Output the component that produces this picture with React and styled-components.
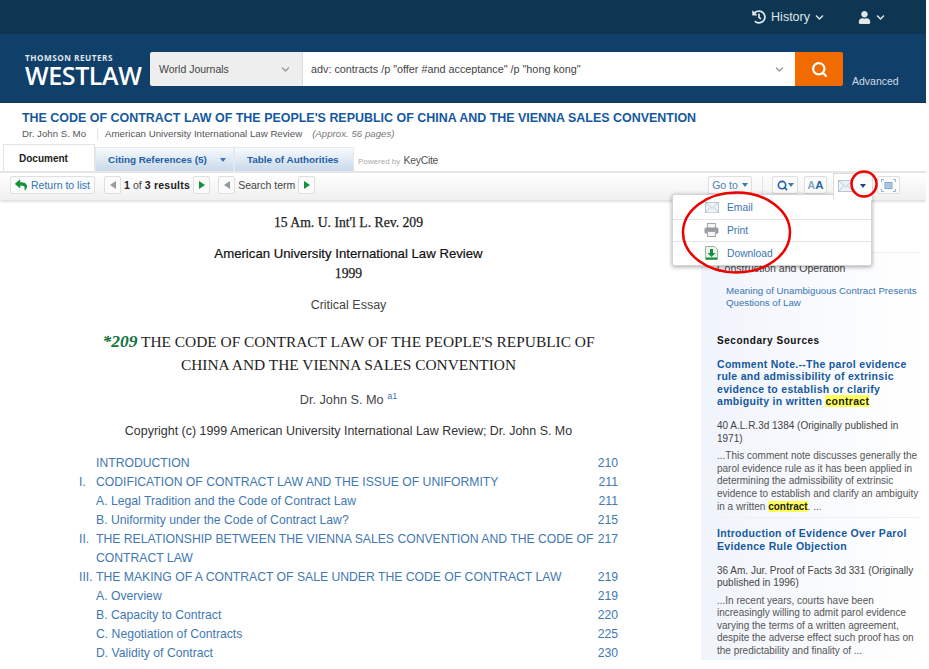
import { createGlobalStyle } from 'styled-components';
import styled from 'styled-components';
import { FaHistory, FaUser, FaChevronDown, FaReply } from 'react-icons/fa';
import { Search as SearchGlyph } from 'lucide-react';

const Global = createGlobalStyle`
    html, body { margin: 0; padding: 0; background: #fff; }
    body { font-family: "Liberation Sans", Arial, sans-serif; }
    * { box-sizing: border-box; }
`;

const toc = [
    { n: '', t: 'INTRODUCTION', p: '210' },
    { n: 'I.', t: 'CODIFICATION OF CONTRACT LAW AND THE ISSUE OF UNIFORMITY', p: '211' },
    { n: '', t: 'A. Legal Tradition and the Code of Contract Law', p: '211' },
    { n: '', t: 'B. Uniformity under the Code of Contract Law?', p: '215' },
    { n: 'II.', t: 'THE RELATIONSHIP BETWEEN THE VIENNA SALES CONVENTION AND THE CODE OF CONTRACT LAW', p: '217' },
    { n: 'III.', t: 'THE MAKING OF A CONTRACT OF SALE UNDER THE CODE OF CONTRACT LAW', p: '219' },
    { n: '', t: 'A. Overview', p: '219' },
    { n: '', t: 'B. Capacity to Contract', p: '220' },
    { n: '', t: 'C. Negotiation of Contracts', p: '225' },
    { n: '', t: 'D. Validity of Contract', p: '230' },
];

function MailIcon({ size = 18 }) {
    return (
        <svg width={size} height={size * 0.8} viewBox="0 0 20 16">
            <rect x="0.5" y="0.5" width="19" height="15" fill="#eef3f7" stroke="#a3b8c8" />
            <path d="M1 1l9 8 9-8M1 15l6-7M19 15l-6-7" fill="none" stroke="#a3b8c8" />
        </svg>
    );
}

function PrintIcon() {
    return (
        <svg width="15" height="14" viewBox="0 0 15 14">
            <rect x="3.5" y="0.5" width="8" height="5" fill="#f4f4f4" stroke="#a5a5a5" />
            <rect x="0.5" y="4.5" width="14" height="6" rx="1.5" fill="#979ca1" />
            <rect x="3.5" y="8.5" width="8" height="5" fill="#f4f4f4" stroke="#a5a5a5" />
        </svg>
    );
}

function DownloadIcon() {
    return (
        <svg width="13" height="14" viewBox="0 0 13 14">
            <path d="M0.5 0.5h9l3 3v10h-12z" fill="#eef3ee" stroke="#8fb89a" />
            <path d="M5 3h3v4h2.5L6.5 11 2.5 7H5z" fill="#12913a" />
            <rect x="1" y="11.5" width="11" height="2" fill="#12913a" />
        </svg>
    );
}

function FitIcon() {
    return (
        <svg width="15" height="13" viewBox="0 0 15 13">
            <rect x="4" y="3.5" width="7" height="6" fill="#a9c6de" stroke="#86aecd" />
            <path d="M0.5 3V0.5H3M12 0.5h2.5V3M14.5 10v2.5H12M3 12.5H0.5V10" fill="none" stroke="#8fb4d2" />
        </svg>
    );
}

function App() {
    return (
        <Page>
            <Global />
            <TopBar>
                <TopItem>
                    <FaHistory size={14} />
                    <span>History</span>
                    <FaChevronDown size={9} />
                </TopItem>
                <TopItem>
                    <FaUser size={13} />
                    <FaChevronDown size={9} />
                </TopItem>
            </TopBar>

            <Header>
                <Logo>
                    <LogoTop>THOMSON REUTERS</LogoTop>
                    <LogoMain>WESTLAW</LogoMain>
                </Logo>
                <SearchBar>
                    <Scope>
                        <span>World Journals</span>
                        <FaChevronDown size={9} color="#9a9a9a" />
                    </Scope>
                    <Query>
                        <span>adv: contracts /p "offer #and acceptance" /p "hong kong"</span>
                        <FaChevronDown size={9} color="#9a9a9a" />
                    </Query>
                    <SearchButton>
                        <SearchGlyph size={17} strokeWidth={3.2} color="#fff" />
                    </SearchButton>
                </SearchBar>
                <Advanced>Advanced</Advanced>
            </Header>

            <TitleBlock>
                <DocTitle>THE CODE OF CONTRACT LAW OF THE PEOPLE'S REPUBLIC OF CHINA AND THE VIENNA SALES CONVENTION</DocTitle>
                <Meta>
                    <span>Dr. John S. Mo</span>
                    <MetaSource>American University International Law Review</MetaSource>
                    <em>(Approx. 56 pages)</em>
                </Meta>
            </TitleBlock>

            <Tabs>
                <ActiveTab>Document</ActiveTab>
                <Tab $width={139}>
                    Citing References (5)
                    <Caret />
                </Tab>
                <Tab $width={120}>Table of Authorities</Tab>
                <Powered>
                    Powered by <b>KeyCite</b>
                </Powered>
            </Tabs>

            <Toolbar>
                <ReturnButton>
                    <FaReply size={12} color="#12913a" />
                    Return to list
                </ReturnButton>
                <Pager>
                    <ArrowButton $dir="left" />
                    <PagerText>
                        <b>1</b> of <b>3 results</b>
                    </PagerText>
                    <ArrowButton $dir="right" />
                </Pager>
                <Pager>
                    <ArrowButton $dir="left" />
                    <PagerText>Search term</PagerText>
                    <ArrowButton $dir="right" />
                </Pager>
                <ToolRight>
                    <GoTo>
                        Go to
                        <Caret />
                    </GoTo>
                    <Divider />
                    <ToolButton $width={26}>
                        <SearchGlyph size={11} strokeWidth={3.5} color="#1f5fa5" />
                        <Caret />
                    </ToolButton>
                    <ToolButton $width={23}>
                        <SmallA>A</SmallA>
                        <BigA>A</BigA>
                    </ToolButton>
                    <DeliverTab>
                        <MailIcon size={15} />
                        <Caret $dark />
                    </DeliverTab>
                    <ToolButton $width={23}>
                        <FitIcon />
                    </ToolButton>
                </ToolRight>
            </Toolbar>

            <Body>
                <Doc>
                    <Citation>15 Am. U. Int'l L. Rev. 209</Citation>
                    <Journal>American University International Law Review</Journal>
                    <Year>1999</Year>
                    <Essay>Critical Essay</Essay>
                    <Heading>
                        <StarPage>*209</StarPage> THE CODE OF CONTRACT LAW OF THE PEOPLE'S REPUBLIC OF
                        <br />
                        CHINA AND THE VIENNA SALES CONVENTION
                    </Heading>
                    <Author>
                        Dr. John S. Mo <sup>a1</sup>
                    </Author>
                    <Copyright>Copyright (c) 1999 American University International Law Review; Dr. John S. Mo</Copyright>
                    <Toc>
                        {toc.map((row) => (
                            <TocRow key={row.t}>
                                <span>{row.n}</span>
                                <span>{row.t}</span>
                                <span>{row.p}</span>
                            </TocRow>
                        ))}
                    </Toc>
                </Doc>

                <Sidebar>
                    <SidePanel>
                        <SideTopic>Construction and Operation</SideTopic>
                        <SideLink>Meaning of Unambiguous Contract Presents Questions of Law</SideLink>
                        <SideHeading>Secondary Sources</SideHeading>
                        <Source>
                            <SourceTitle>
                                Comment Note.--The parol evidence rule and admissibility of extrinsic evidence to establish or clarify ambiguity in written <Mark>contract</Mark>
                            </SourceTitle>
                            <SourceCite>40 A.L.R.3d 1384 (Originally published in 1971)</SourceCite>
                            <SourceText>
                                ...This comment note discusses generally the parol evidence rule as it has been applied in determining the admissibility of extrinsic evidence to establish and clarify an ambiguity in a written <Mark>contract</Mark>. ...
                            </SourceText>
                        </Source>
                        <Source>
                            <SourceTitle>Introduction of Evidence Over Parol Evidence Rule Objection</SourceTitle>
                            <SourceCite>36 Am. Jur. Proof of Facts 3d 331 (Originally published in 1996)</SourceCite>
                            <SourceText>
                                ...In recent years, courts have been increasingly willing to admit parol evidence varying the terms of a written agreement, despite the adverse effect such proof has on the predictability and finality of ...
                            </SourceText>
                        </Source>
                    </SidePanel>
                </Sidebar>
            </Body>

            <Menu>
                <MenuItem>
                    <MenuIcon><MailIcon size={14} /></MenuIcon>
                    Email
                </MenuItem>
                <MenuItem>
                    <MenuIcon><PrintIcon /></MenuIcon>
                    Print
                </MenuItem>
                <MenuItem>
                    <MenuIcon><DownloadIcon /></MenuIcon>
                    Download
                </MenuItem>
            </Menu>

            <Annotations viewBox="0 0 926 660">
                <ellipse cx="864" cy="184" rx="12.5" ry="12.5" />
                <ellipse cx="736.5" cy="232.5" rx="53.5" ry="40" />
            </Annotations>
        </Page>
    );
}

const Page = styled.div`
    position: relative;
    width: 926px;
    height: 660px;
    overflow: hidden;
    background: #fff;
`;

const TopBar = styled.div`
    display: flex;
    justify-content: flex-end;
    align-items: center;
    gap: 34px;
    height: 34px;
    padding-right: 41px;
    background: #0e3551;
`;

const TopItem = styled.div`
    display: flex;
    align-items: center;
    gap: 5px;
    color: #dfe6ec;
    font-size: 12.5px;
`;

const Header = styled.div`
    display: flex;
    align-items: flex-start;
    height: 69px;
    padding: 18px 0 0 25px;
    background: #10406a;
    border-bottom: 1px solid #0d3554;
`;

const Logo = styled.div`
    width: 125px;
    color: #fff;
    padding-top: 1px;
`;

const LogoTop = styled.div`
    font-family: "Open Sans", sans-serif;
    font-size: 8.2px;
    font-weight: 700;
    letter-spacing: 0.5px;
    line-height: 10px;
    color: #dfe6ec;
`;

const LogoMain = styled.div`
    font-family: "Open Sans", sans-serif;
    font-size: 25px;
    font-weight: 600;
    line-height: 25px;
    letter-spacing: -0.4px;
`;

const SearchBar = styled.div`
    display: flex;
    width: 693px;
    height: 34px;
    border-radius: 2px;
    overflow: hidden;
    color: #444;
`;

const Scope = styled.div`
    display: flex;
    align-items: center;
    justify-content: space-between;
    width: 153px;
    padding: 0 12px 0 9px;
    background: #eeeeee;
    border-right: 1px solid #dcdcdc;
    font-size: 10.5px;
`;

const Query = styled.div`
    display: flex;
    flex: 1;
    align-items: center;
    justify-content: space-between;
    padding: 0 11px 0 8px;
    background: #fff;
    font-size: 10.8px;
`;

const SearchButton = styled.div`
    display: flex;
    align-items: center;
    justify-content: center;
    width: 48px;
    background: #f26b00;
`;

const Advanced = styled.div`
    margin: 22px 0 0 9px;
    color: #cfdbe5;
    font-size: 10.5px;
    line-height: 14px;
`;

const TitleBlock = styled.div`
    height: 41px;
    padding: 7px 0 0 22px;
`;

const DocTitle = styled.div`
    color: #1558a0;
    font-size: 12.46px;
    font-weight: 700;
    line-height: 16px;
    white-space: nowrap;
`;

const Meta = styled.div`
    display: flex;
    align-items: center;
    color: #555;
    font-size: 9.7px;
    line-height: 12px;
    margin-top: 2px;

    em {
        margin-left: 10px;
        color: #777;
    }
`;

const MetaSource = styled.span`
    margin-left: 11px;
    padding-left: 7px;
    border-left: 1px solid #e4e4e4;
`;

const Tabs = styled.div`
    display: flex;
    align-items: flex-end;
    height: 27px;
    padding-left: 3px;
`;

const ActiveTab = styled.div`
    display: flex;
    align-items: center;
    width: 92px;
    height: 27px;
    padding-left: 15px;
    border: 1px solid #e2e2e2;
    border-bottom: none;
    background: #fff;
    color: #222;
    font-size: 10px;
    font-weight: 700;
`;

const Tab = styled.div`
    display: flex;
    align-items: center;
    gap: 13px;
    width: ${(props) => props.$width}px;
    height: 24px;
    padding-left: 12px;
    border: 1px solid #e3e9ef;
    border-bottom: none;
    background: linear-gradient(#f7fafc, #c8d9ea);
    color: #1f5fa5;
    font-size: 9.9px;
    font-weight: 700;
`;

const Powered = styled.div`
    align-self: center;
    margin: 5px 0 0 4px;
    color: #aaa;
    font-size: 8px;

    b {
        margin-left: 1px;
        color: #555;
        font-size: 10.5px;
        font-weight: 400;
        letter-spacing: -0.3px;
    }
`;

const Toolbar = styled.div`
    display: flex;
    align-items: center;
    height: 29px;
    padding: 0 26px 3px 10px;
    border-top: 2px solid #e6e6e6;
    background: linear-gradient(#fff, #f0f0f0);
    box-shadow: 0 2px 2px rgba(0, 0, 0, 0.12);
    position: relative;
    font-size: 10.5px;
`;

const ButtonBase = styled.div`
    display: flex;
    align-items: center;
    justify-content: center;
    height: 18px;
    border: 1px solid #dfdfdf;
    border-radius: 2px;
    background: #fbfbfb;
`;

const ReturnButton = styled(ButtonBase)`
    gap: 4px;
    width: 85px;
    color: #2f73b5;
`;

const Pager = styled.div`
    display: flex;
    align-items: center;
    gap: 3px;
    margin-left: 9px;
    color: #444;

    & + & {
        margin-left: 8px;
    }
`;

const PagerText = styled.span`
    b {
        color: #222;
        letter-spacing: 0.25px;
    }
`;

const ArrowButton = styled(ButtonBase)`
    width: 17px;

    &::after {
        content: '';
        border-top: 4.5px solid transparent;
        border-bottom: 4.5px solid transparent;
        ${(props) => (props.$dir === 'left' ? 'border-right: 6px solid #999;' : 'border-left: 6px solid #12913a;')}
    }
`;

const ToolRight = styled.div`
    display: flex;
    align-items: center;
    align-self: stretch;
    margin-left: auto;
`;

const GoTo = styled(ButtonBase)`
    gap: 4px;
    width: 44px;
    color: #4a82b8;
`;

const Divider = styled.div`
    width: 1px;
    height: 18px;
    margin: 0 9px 0 10px;
    background: #e2e2e2;
`;

const ToolButton = styled(ButtonBase)`
    width: ${(props) => props.$width}px;
    margin-right: 6px;

    &:last-child {
        margin-right: 0;
    }
`;

const SmallA = styled.span`
    color: #7da6cc;
    font-size: 10.5px;
    font-weight: 700;
`;

const BigA = styled.span`
    color: #2a659f;
    font-size: 11.5px;
    font-weight: 700;
`;

const DeliverTab = styled.div`
    display: flex;
    align-items: center;
    justify-content: space-between;
    align-self: flex-end;
    width: 40px;
    height: 27px;
    margin: 0 4px -3px 0;
    padding: 0 6px 3px 4px;
    border: 1px solid #dcdcdc;
    border-bottom: none;
    background: #fff;
    position: relative;
    z-index: 3;
`;

const Caret = styled.span`
    display: inline-block;
    width: 0;
    height: 0;
    border-left: 3.5px solid transparent;
    border-right: 3.5px solid transparent;
    border-top: 4px solid ${(props) => (props.$dark ? '#1d4d80' : '#3a78b8')};
`;

const Body = styled.div`
    display: flex;
`;

const Doc = styled.div`
    width: 701px;
    padding: 15px 4px 0 0;
    text-align: center;
    color: #333;
`;

const Citation = styled.div`
    font-family: "Liberation Serif", serif;
    font-size: 13.7px;
    line-height: 16px;
    color: #222;
    -webkit-text-stroke: 0.25px #222;
`;

const Journal = styled.div`
    margin-top: 15px;
    font-size: 13.2px;
    line-height: 16px;
    color: #111;
    -webkit-text-stroke: 0.2px #111;
`;

const Year = styled.div`
    margin-top: 4px;
    font-family: "Liberation Serif", serif;
    font-size: 13.7px;
    line-height: 16px;
    color: #222;
    -webkit-text-stroke: 0.25px #222;
`;

const Essay = styled.div`
    margin-top: 15px;
    font-size: 12.5px;
    line-height: 16px;
    color: #444;
`;

const Heading = styled.div`
    margin-top: 17px;
    font-family: "Liberation Serif", serif;
    font-size: 15.4px;
    line-height: 23px;
    color: #222;
`;

const StarPage = styled.span`
    color: #12733a;
    font-size: 17.5px;
    font-style: italic;
    font-weight: 700;
    line-height: 16px;
`;

const Author = styled.div`
    margin-top: 16px;
    font-size: 12.7px;
    line-height: 16px;
    color: #444;

    sup {
        color: #3b78c5;
        font-size: 9px;
        line-height: 0;
    }
`;

const Copyright = styled.div`
    margin-top: 15px;
    font-size: 12.45px;
    line-height: 16px;
    color: #333;
`;

const Toc = styled.div`
    margin: 15px 0 0 79px;
    width: 539px;
    text-align: left;
    color: #3f78b3;
    font-size: 12.2px;
    line-height: 18.95px;
`;

const TocRow = styled.div`
    display: grid;
    grid-template-columns: 17px 1fr 21px;

    span:last-child {
        text-align: right;
    }
`;

const Sidebar = styled.div`
    width: 218px;
    padding-top: 52px;
`;

const SidePanel = styled.div`
    height: 410px;
    padding: 9px 0 0 16px;
    border-top: 1px solid #eef0f3;
    background: linear-gradient(90deg, #f0f4fb, #fff);
    font-size: 10px;
    color: #444;
`;

const SideTopic = styled.div`
    font-size: 10.5px;
    line-height: 13px;
    color: #444;
`;

const SideLink = styled.div`
    margin: 10px 0 0 9px;
    font-size: 9.7px;
    line-height: 12px;
    color: #3a74b5;
`;

const SideHeading = styled.div`
    margin: 25px 0 2px;
    color: #111;
    font-weight: 700;
    line-height: 13px;
    letter-spacing: 0.55px;
`;

const Source = styled.div`
    padding: 9px 0 4px;
    border-bottom: 1px solid #eef0f3;
`;

const SourceTitle = styled.div`
    color: #1558a0;
    font-size: 10.5px;
    font-weight: 700;
    line-height: 12.4px;
    letter-spacing: 0.3px;
`;

const SourceCite = styled.div`
    margin-top: 12.6px;
    line-height: 12.5px;
`;

const SourceText = styled.div`
    margin-top: 5px;
    line-height: 12.6px;
    color: #555;
`;

const Mark = styled.span`
    background: #ffff5a;
    color: #222;
    font-weight: 700;
`;

const Menu = styled.div`
    position: absolute;
    left: 672px;
    top: 194px;
    width: 200px;
    padding-top: 2px;
    background: #fff;
    border: 1px solid #d4d4d4;
    border-radius: 2px;
    box-shadow: 0 1px 4px rgba(0, 0, 0, 0.35);
    z-index: 2;
`;

const MenuItem = styled.div`
    display: flex;
    align-items: center;
    height: 22.5px;
    padding-left: 31px;
    color: #3a74b5;
    font-size: 10.3px;
    border-bottom: 1px solid #e4e4e4;

    &:last-child {
        border-bottom: none;
    }
`;

const MenuIcon = styled.span`
    display: flex;
    justify-content: center;
    width: 15px;
    margin-right: 8px;
`;

const Annotations = styled.svg`
    position: absolute;
    left: 0;
    top: 0;
    width: 926px;
    height: 660px;
    pointer-events: none;
    z-index: 4;

    ellipse {
        fill: none;
        stroke: #ee0000;
        stroke-width: 2.5;
    }
`;

export default App;
